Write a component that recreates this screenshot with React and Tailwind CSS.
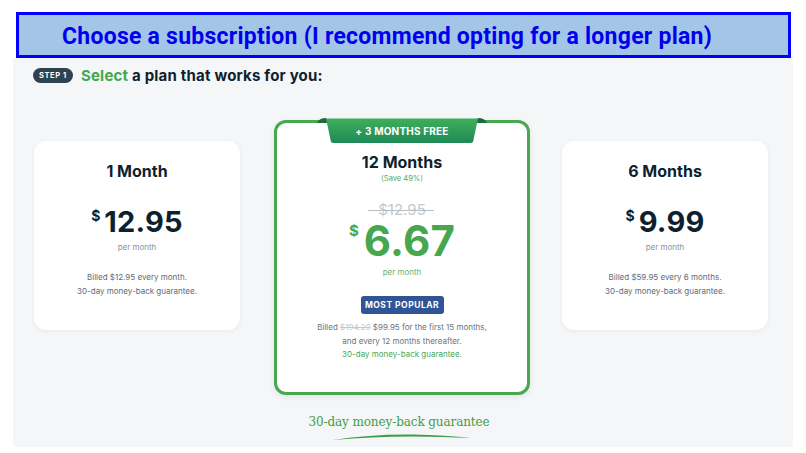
import React from "react";

const PLANS_SIDE = {
  one: { title: "1 Month", price: "12.95", billed: "Billed $12.95 every month." },
  six: { title: "6 Months", price: "9.99", billed: "Billed $59.95 every 6 months." },
};

function SideCard({ plan }) {
  return (
    <div className="mt-[21px] w-[206px] h-[189px] bg-white rounded-[12px] shadow-[0_1px_4px_rgba(15,31,46,0.06)] flex flex-col items-center pt-[20px]">
      <div className="text-[16px] leading-[20px] font-bold text-[#0f1f2e]">{plan.title}</div>
      <div className="mt-[24px] flex items-start text-[#0f1f2e] font-bold">
        <span className="text-[14px] leading-[18px] mt-[2px] mr-[4px]">$</span>
        <span className="text-[29px] leading-[34px] tracking-[0.2px]">{plan.price}</span>
      </div>
      <div className="mt-[2px] text-[8px] leading-[12px] text-[#8a949c]">per month</div>
      <div className="mt-[17px] text-[8px] leading-[14px] text-[#5f6a73] text-center">
        <div>{plan.billed}</div>
        <div>30-day money-back guarantee.</div>
      </div>
    </div>
  );
}

function Ribbon() {
  return (
    <div className="absolute left-1/2 -translate-x-1/2 top-[-6px] w-[170px] h-[27px] flex items-center justify-center">
      <svg className="absolute inset-0" width="170" height="27" viewBox="0 0 170 27">
        <defs>
          <linearGradient id="rib" x1="0" y1="0" x2="0" y2="1">
            <stop offset="0" stopColor="#3fae5b" />
            <stop offset="1" stopColor="#1e8a55" />
          </linearGradient>
        </defs>
        <path d="M0 6 Q2 1 9 1 L12 6 Z" fill="#1d6b3f" />
        <path d="M170 6 Q168 1 161 1 L158 6 Z" fill="#1d6b3f" />
        <path d="M9 1.5 L161 1.5 L156 25 Q155 26 153 26 L17 26 Q15 26 14 25 Z" fill="url(#rib)" />
      </svg>
      <span className="relative text-white font-bold text-[10px] leading-[12px] tracking-[0.2px] mt-[1px]">
        + 3 MONTHS FREE
      </span>
    </div>
  );
}

function MiddleCard() {
  return (
    <div className="relative w-[256px] h-[275px] bg-white rounded-[12px] border-[3px] border-[#48a84f] shadow-[0_2px_6px_rgba(15,31,46,0.08)] flex flex-col items-center pt-[29px]">
      <Ribbon />
      <div className="text-[16px] leading-[20px] font-bold text-[#0f1f2e]">12 Months</div>
      <div className="mt-[1px] text-[7.5px] leading-[12px] text-[#5aa862]">(Save 49%)</div>
      <div className="relative mt-[17px] text-[15px] leading-[16px] text-[#c3c9cd]">
        $12.95
        <span className="absolute left-[-10px] right-[-8px] top-[8px] h-[1px] bg-[#b7bec3]" />
      </div>
      <div className="mt-[2px] flex items-start text-[#46a74e] font-bold">
        <span className="text-[15px] leading-[18px] mt-[2px] mr-[5px]">$</span>
        <span className="text-[42px] leading-[42px] tracking-[0.2px]">6.67</span>
      </div>
      <div className="mt-[4px] text-[8px] leading-[12px] text-[#6bb272]">per month</div>
      <div className="mt-[18px] w-[83px] h-[18px] rounded-[3px] bg-[#2f5596] text-white text-[8.5px] font-bold tracking-[0.5px] flex items-center justify-center">
        MOST POPULAR
      </div>
      <div className="mt-[7px] text-[8px] leading-[13.5px] text-[#6a747c] text-center">
        <div>
          Billed <span className="line-through text-[#c3c9cd]">$194.20</span> $99.95 for the first 15 months,
        </div>
        <div>and every 12 months thereafter.</div>
        <div className="text-[#4aa753]">30-day money-back guarantee.</div>
      </div>
    </div>
  );
}

export default function App() {
  return (
    <div className="w-[806px] h-[453px] bg-white font-['Inter','Noto_Sans',sans-serif] overflow-hidden">
      <div className="pt-[12px] px-[16px] pr-[15px]">
        <div className="h-[46px] bg-[#a3c6e8] border-[3px] border-[#0000ff] flex items-center pl-[43px]">
          <span className="font-['Roboto','Liberation_Sans',sans-serif] font-bold text-[#0000ee] text-[23px] leading-[28px] tracking-[0.25px] mt-[3px] whitespace-nowrap">
            Choose a subscription (I recommend opting for a longer plan)
          </span>
        </div>
      </div>
      <div className="mx-[13px] w-[780px] h-[389px] bg-[#f5f6f8] pt-[10px]">
        <div className="flex items-center pl-[20px] h-[15px]">
          <span className="h-[15px] px-[6px] rounded-full bg-[#2e4250] text-white text-[7.5px] font-bold tracking-[0.6px] flex items-center">
            STEP 1
          </span>
          <span className="ml-[8px] text-[15px] leading-[18px] font-bold text-[#0f1f2e] tracking-[0.2px]">
            <span className="text-[#46a74e]">Select</span> a plan that works for you:
          </span>
        </div>
        <div className="mt-[37px] pl-[21px] flex items-start">
          <SideCard plan={PLANS_SIDE.one} />
          <div className="ml-[34px]">
            <MiddleCard />
          </div>
          <div className="ml-[32px]">
            <SideCard plan={PLANS_SIDE.six} />
          </div>
        </div>
        <div className="mt-[19px] flex flex-col items-center pr-[8px]">
          <div className="font-['DejaVu_Serif','Liberation_Serif',serif] text-[12px] leading-[16px] text-[#3f9d49] tracking-[-0.1px]">
            30-day money-back guarantee
          </div>
          <svg width="140" height="8" viewBox="0 0 140 8" className="mt-[3px] ml-[6px]">
            <path d="M1 7 Q40 1 80 1.5 Q115 2 139 5 Q110 3.5 80 3.5 Q40 3.5 1 7 Z" fill="#3f9d49" />
          </svg>
        </div>
      </div>
    </div>
  );
}
